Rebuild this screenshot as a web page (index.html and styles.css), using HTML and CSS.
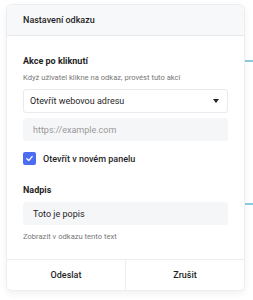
FILE: index.html
```html
<!DOCTYPE html>
<html lang="cs">
<head>
<meta charset="UTF-8">
<title>Nastavení odkazu</title>
<link rel="stylesheet" href="styles.css">
</head>
<body>
<div class="deco deco-top"></div>
<div class="deco deco-bottom"></div>
<div class="dialog">
  <div class="dialog-head">Nastavení odkazu</div>
  <div class="dialog-body">
    <h3 class="field-title">Akce po kliknutí</h3>
    <p class="hint">Když uživatel klikne na odkaz, provést tuto akci</p>
    <div class="select">
      <span>Otevřít webovou adresu</span>
      <span class="caret"></span>
    </div>
    <div class="input placeholder">https://example.com</div>
    <label class="check">
      <span class="box">
        <svg width="9" height="9" viewBox="0 0 10 10"><path d="M2 5.2 L4.2 7.3 L8 2.8" fill="none" stroke="#fff" stroke-width="1.4" stroke-linecap="round" stroke-linejoin="round"/></svg>
      </span>
      Otevřít v novém panelu
    </label>
    <h3 class="field-title second">Nadpis</h3>
    <div class="input value">Toto je popis</div>
    <p class="hint small">Zobrazit v odkazu tento text</p>
  </div>
  <div class="dialog-foot">
    <button class="btn">Odeslat</button>
    <button class="btn">Zrušit</button>
  </div>
</div>
</body>
</html>
```

FILE: styles.css
```css
body{margin:0;background:#fff;font-family:Roboto,"Liberation Sans",Arial,sans-serif;color:#222;position:relative;width:253px;height:300px;overflow:hidden;}
.deco{position:absolute;left:230px;width:30px;height:2px;background:#8fcbe0;}
.deco-top{top:60px;}
.deco-bottom{top:203px;}
.dialog{position:relative;margin:5px 0 0 7px;width:237px;height:285px;background:#fff;border-radius:5px;box-shadow:0 0 0 1px #eceef1,0 3px 8px rgba(0,0,0,0.07);display:flex;flex-direction:column;overflow:hidden;}
.dialog-head{height:31px;box-sizing:border-box;padding:0 16px;display:flex;align-items:center;background:#f7f8fa;border-bottom:1px solid #e6e8eb;font-size:9px;font-weight:500;color:#1f1f1f;}
.dialog-body{flex:1;padding:19px 16px 0;}
.field-title{margin:0;font-size:9px;font-weight:700;color:#1f1f1f;line-height:12px;}
.field-title.second{margin-top:19px;}
.hint{margin:5px 0 5px;font-size:7.6px;color:#777;line-height:12px;}
.hint.small{margin-top:6px;}
.select{height:24px;box-sizing:border-box;border:1px solid #e8eaed;border-radius:3px;display:flex;align-items:center;justify-content:space-between;padding:0 8px 0 6px;font-size:9px;color:#1f1f1f;}
.caret{width:0;height:0;border-left:3.5px solid transparent;border-right:3.5px solid transparent;border-top:4px solid #222;}
.input{margin-top:5px;height:23px;box-sizing:border-box;background:#f5f6f8;border-radius:3px;display:flex;align-items:center;padding:0 10px;font-size:9px;color:#1f1f1f;}
.input.value{margin-top:6px;}
.input.placeholder{color:#999;}
.check{display:flex;align-items:center;gap:7px;margin-top:11px;font-size:9px;font-weight:500;color:#1f1f1f;}
.box{width:13px;height:13px;border-radius:2px;background:#4d6cf4;display:flex;align-items:center;justify-content:center;}
.dialog-foot{height:31px;box-sizing:border-box;border-top:1px solid #eceef1;display:flex;}
.btn{flex:1;border:none;background:#fff;font-family:inherit;font-size:9px;font-weight:500;color:#1f1f1f;padding:0;}
.btn+.btn{border-left:1px solid #eceef1;}
```
